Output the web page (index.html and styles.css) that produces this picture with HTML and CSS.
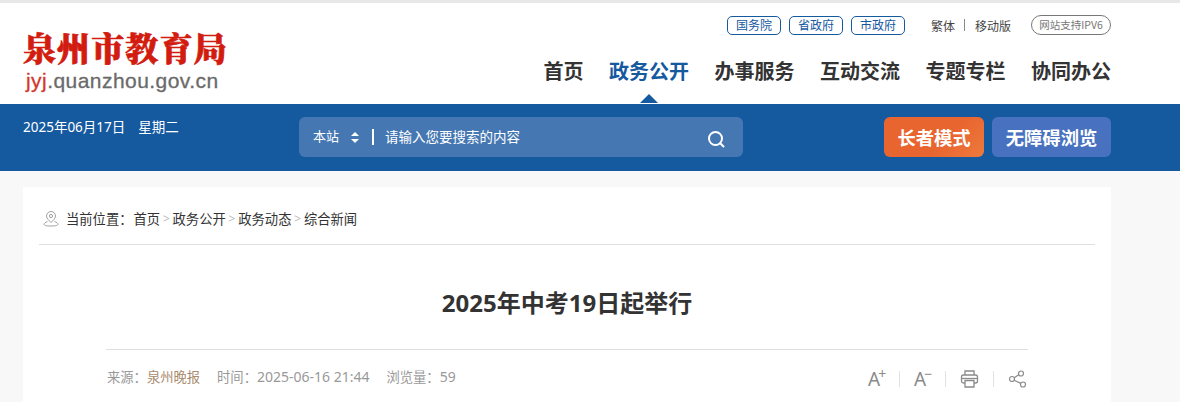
FILE: index.html
```html
<!DOCTYPE html>
<html lang="zh-CN">
<head>
<meta charset="utf-8">
<title>2025年中考19日起举行</title>
<link rel="stylesheet" href="styles.css">
</head>
<body>
<header class="header">
  <div class="wrap header-inner">
    <div class="logo">
      <div class="logo-title">泉州市教育局</div>
      <div class="logo-url"><span class="logo-red">jyj</span>.quanzhou.gov.cn</div>
    </div>
    <div class="header-right">
      <div class="toplinks">
        <a class="pill">国务院</a>
        <a class="pill">省政府</a>
        <a class="pill">市政府</a>
        <a class="tl tl-first">繁体</a>
        <i class="tl-sep"></i>
        <a class="tl">移动版</a>
        <a class="ipv6">网站支持IPV6</a>
      </div>
      <nav class="nav">
        <a>首页</a>
        <a class="active">政务公开</a>
        <a>办事服务</a>
        <a>互动交流</a>
        <a>专题专栏</a>
        <a>协同办公</a>
      </nav>
    </div>
  </div>
</header>
<div class="bar">
  <div class="wrap bar-inner">
    <div class="date"><span>2025年06月17日</span><span>星期二</span></div>
    <div class="search">
      <span class="scope">本站</span>
      <svg class="updown" width="8" height="11" viewBox="0 0 8 11"><path d="M4 0l4 4H0zM4 11L0 7h8z" fill="#fff"/></svg>
      <i class="caret"></i>
      <span class="placeholder">请输入您要搜索的内容</span>
      <svg class="mag" width="18" height="18" viewBox="0 0 18 18" fill="none" stroke="#fff" stroke-width="2"><circle cx="8.5" cy="8.5" r="6.5"/><path d="M13.2 13.2l3.3 3.3" stroke-linecap="round"/></svg>
    </div>
    <div class="btns">
      <a class="btn btn-orange">长者模式</a>
      <a class="btn btn-blue">无障碍浏览</a>
    </div>
  </div>
</div>
<main class="wrap">
  <div class="card">
    <div class="crumbs">
      <svg class="pin" width="16" height="16" viewBox="0 0 16 16" fill="none" stroke="#a0a0a0" stroke-width="1"><path d="M8 11.500C6 9.300 3.500 7.600 3.500 5a4.500 4.500 0 0 1 9 0c0 2.600-2.500 4.300-4.500 6.500z"/><circle cx="8" cy="5" r="1.600"/><path d="M4.500 10.500C2.500 11.300 1 12.300 1 13.300c0 1 2 1.700 7 1.700s7-.7 7-1.700c0-1-1.500-2-3.500-2.800"/></svg>
      <span class="crumb-label">当前位置：</span><a>首页</a><b>&gt;</b><a>政务公开</a><b>&gt;</b><a>政务动态</a><b>&gt;</b><a>综合新闻</a>
    </div>
    <article class="article">
      <h1 class="title">2025年中考19日起举行</h1>
      <div class="meta">
        <div class="meta-text">
          <span>来源：<em>泉州晚报</em></span>
          <span>时间：<span class="num">2025-06-16 21:44</span></span>
          <span>浏览量：<span class="num">59</span></span>
        </div>
        <div class="tools">
          <span class="fontbtn">A<sup>+</sup></span>
          <i class="tool-sep"></i>
          <span class="fontbtn">A<sup>−</sup></span>
          <i class="tool-sep"></i>
          <svg width="19" height="18" viewBox="0 0 18 18" fill="none" stroke="#8a8a8a" stroke-width="1.300"><path d="M4.500 5V1h9v4"/><rect x="1" y="5" width="16" height="8" rx="2"/><path d="M4.500 10.500h9V17h-9z" fill="#fff"/><path d="M1.500 8.500h15"/></svg>
          <i class="tool-sep"></i>
          <svg width="19" height="18" viewBox="0 0 18 18" fill="none" stroke="#8a8a8a" stroke-width="1.200"><circle cx="12.500" cy="3.500" r="2.500"/><circle cx="3.500" cy="9" r="2.500"/><circle cx="14.500" cy="14.500" r="2.500"/><path d="M10.300 4.800L5.700 7.700M5.700 10.200l6.600 3.200"/></svg>
        </div>
      </div>
    </article>
  </div>
</main>
</body>
</html>
```
FILE: styles.css
```css
* { box-sizing: border-box; }
html, body { margin: 0; padding: 0; }
body {
  height: 402px;
  overflow: hidden;
  background: #f8f8f8;
  color: #333;
  font-family: "Noto Sans", "Noto Sans CJK SC", sans-serif;
  font-size: 14px;
}
a { color: inherit; text-decoration: none; }
em { font-style: normal; }
.wrap { width: 1088px; margin-left: 23px; }

.header { height: 104px; background: #fff; border-top: 3px solid #e8e8e8; }
.header-inner { display: flex; justify-content: space-between; height: 101px; }
.logo { padding-top: 24px; }
.logo-title {
  font-family: "Noto Serif CJK SC", "Noto Sans CJK SC", sans-serif;
  font-size: 33px;
  line-height: 40px;
  font-weight: 900;
  color: #d21c10;
  letter-spacing: 1.100px;
  -webkit-text-stroke: 0.700px #d21c10;
  width: 210px;
  white-space: nowrap;
}
.logo-url {
  font-family: "Liberation Sans", Arial, sans-serif;
  font-size: 21px;
  line-height: 24px;
  margin-top: 2px;
  margin-left: 3px;
  color: #6a6a6a;
  letter-spacing: 0.450px;
  -webkit-text-stroke: 0.300px #6a6a6a;
}
.logo-red { color: #d2372c; -webkit-text-stroke-color: #d2372c; }

.header-right { display: flex; flex-direction: column; align-items: flex-end; }
.toplinks { display: flex; align-items: center; height: 20px; margin-top: 12px; font-size: 12px; font-family: "Noto Sans CJK SC", sans-serif; }
.pill {
  width: 54px;
  height: 19px;
  line-height: 16px;
  margin-left: 8px;
  border: 1px solid #15599f;
  border-radius: 5px;
  text-align: center;
  color: #15599f;
}
.tl { color: #444; }
.tl-first { margin-left: 26px; }
.tl-sep { width: 1px; height: 12px; background: #888; margin: 0 10px 0 9px; }
.ipv6 {
  width: 80px;
  height: 20px;
  line-height: 17px;
  margin-left: 20px;
  border: 1px solid #777;
  border-radius: 10px;
  text-align: center;
  font-size: 10.500px;
  color: #777;
}
.nav { display: flex; gap: 25.500px; margin-top: 21px; font-size: 20px; line-height: 30px; font-weight: 700; color: #333; font-family: "Noto Sans CJK SC", sans-serif; }
.nav a { position: relative; display: block; }
.nav .active { color: #15599f; }
.nav .active::after {
  content: "";
  position: absolute;
  left: 50%;
  top: 38px;
  margin-left: -9px;
  width: 0;
  height: 0;
  border: 9px solid transparent;
  border-top: 0;
  border-bottom-color: #15599f;
}

.bar { height: 67px; background: #15599f; }
.bar-inner { display: flex; height: 67px; padding-top: 13px; }
.date { width: 276px; color: #fff; font-size: 13.500px; line-height: 20px; display: flex; gap: 13px; }
.search {
  width: 444px;
  height: 40px;
  display: flex;
  align-items: center;
  padding: 0 18px 0 14px;
  background: #4577b2;
  border-radius: 6px;
  color: #fff;
  font-size: 13.500px;
}
.scope { width: 38px; font-size: 13px; padding-bottom: 3px; }
.updown { display: block; }
.caret { width: 2px; height: 16px; background: #fff; margin: 0 13px; }
.placeholder { flex: 1; padding-bottom: 3px; margin-left: -2px; }
.mag { display: block; margin-top: 3px; }
.btns { display: flex; gap: 8px; margin-left: auto; font-family: "Noto Sans CJK SC", sans-serif; }
.btn {
  height: 40px;
  line-height: 40px;
  border-radius: 6px;
  color: #fff;
  font-size: 18.300px;
  font-weight: 700;
  text-align: center;
}
.btn-orange { width: 100px; background: linear-gradient(135deg, #e96530 60%, #ec7a3c); }
.btn-blue { width: 119px; background: #4872c0; }

.card { margin-top: 16px; height: 230px; background: #fff; padding: 0 16px; }
.crumbs {
  display: flex;
  align-items: center;
  height: 58px;
  padding: 5px 0 0 4px;
  border-bottom: 1px solid #dfdfdf;
  font-size: 13.300px;
  color: #333;
  white-space: nowrap;
}
.pin { margin-right: 7px; margin-top: 2px; display: block; }
.crumb-label { margin-right: 1px; }
.crumbs b { font-weight: 400; color: #bbb; font-size: 12px; width: 12.500px; text-align: center; }
.article { padding: 0 67px; }
.title { margin: 0; height: 105px; line-height: 116px; text-align: center; font-size: 24px; font-weight: 700; color: #333; border-bottom: 1px solid #dfdfdf; }
.meta { display: flex; justify-content: space-between; align-items: center; height: 57px; color: #999; font-size: 13.300px; }
.meta-text { display: flex; gap: 17px; padding: 0 0 4px 1px; }
.meta-text em { color: #a98c6d; }
.num { font-size: 14px; }
.tools { display: flex; align-items: center; gap: 14px; margin-right: 1px; }
.fontbtn { font-family: "Noto Sans", sans-serif; font-size: 19px; line-height: 20px; color: #8a8a8a; display: flex; width: 17px; }
.fontbtn sup { font-size: 14px; line-height: 10px; margin-left: -2px; }
.tool-sep { width: 1px; height: 16px; background: #e2e2e2; }
```
